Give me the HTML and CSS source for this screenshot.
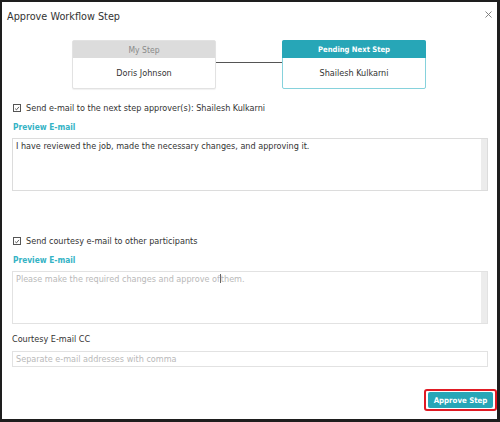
FILE: index.html
```html
<!DOCTYPE html>
<html>
<head>
<meta charset="utf-8">
<link rel="stylesheet" href="styles.css">
</head>
<body>
<div class="dialog">
  <div class="header">
    <span class="title">Approve Workflow Step</span>
    <svg class="close" width="7" height="7" viewBox="0 0 7 7"><path d="M0.5 0.5 L6.5 6.5 M6.5 0.5 L0.5 6.5" stroke="#777" stroke-width="0.9" fill="none"/></svg>
  </div>
  <div class="steps">
    <div class="step step-done">
      <div class="step-head">My Step</div>
      <div class="step-body">Doris Johnson</div>
    </div>
    <div class="connector"></div>
    <div class="step step-next">
      <div class="step-head">Pending Next Step</div>
      <div class="step-body">Shailesh Kulkarni</div>
    </div>
  </div>
  <label class="check-row first">
    <span class="checkbox"><svg width="7" height="7" viewBox="0 0 7 7"><path d="M1.3 3.6 L2.9 5.1 L5.8 1.6" fill="none" stroke="#333" stroke-width="0.9"/></svg></span>
    <span>Send e-mail to the next step approver(s): Shailesh Kulkarni</span>
  </label>
  <div class="preview">Preview E-mail</div>
  <div class="area">I have reviewed the job, made the necessary changes, and approving it.<span class="scroll"></span></div>
  <label class="check-row second">
    <span class="checkbox"><svg width="7" height="7" viewBox="0 0 7 7"><path d="M1.3 3.6 L2.9 5.1 L5.8 1.6" fill="none" stroke="#333" stroke-width="0.9"/></svg></span>
    <span>Send courtesy e-mail to other participants</span>
  </label>
  <div class="preview">Preview E-mail</div>
  <div class="area placeholder">Please make the required changes and approve of<span class="caret"></span>them.<span class="scroll"></span></div>
  <div class="cc-label">Courtesy E-mail CC</div>
  <div class="input placeholder">Separate e-mail addresses with comma</div>
  <div class="footer">
    <div class="highlight"><button class="approve">Approve Step</button></div>
  </div>
</div>
</body>
</html>
```
FILE: styles.css
```css
* { box-sizing: border-box; }
html, body { margin: 0; padding: 0; background: #fff; }
body {
  font-family: "DejaVu Sans Condensed", "DejaVu Sans", sans-serif;
  font-stretch: condensed;
  color: #333;
  font-size: 9px;
}
.dialog {
  width: 500px;
  height: 422px;
  border: 2px solid #1e1e1e;
  border-right-width: 3px;
  border-bottom-width: 3px;
  padding: 0 9px 0 10px;
  display: flex;
  flex-direction: column;
}
.header {
  display: flex;
  justify-content: space-between;
  align-items: center;
  height: 28px;
  margin-left: -5px;
}
.title {
  font-family: "DejaVu Sans", sans-serif;
  font-stretch: normal;
  font-size: 9.7px;
  color: #333;
}
.close { display: block; margin: -4px -4px 0 0; }
.steps {
  display: flex;
  align-items: flex-start;
  margin: 10px 0 0 60px;
}
.step {
  width: 144px;
  height: 49px;
  border-radius: 2px;
  background: #fff;
  display: flex;
  flex-direction: column;
}
.step-done { border: 1px solid #e2e2e2; box-shadow: 0 1px 1px rgba(0,0,0,0.06); }
.step-next { border: 1px solid #86d2dc; }
.step-head {
  height: 17px;
  display: flex;
  align-items: center;
  justify-content: center;
  font-size: 8.5px;
}
.step-done .step-head { background: #dcdcdc; color: #8a8a8a; }
.step-next .step-head {
  background: #27a6b7;
  color: #fff;
  font-weight: bold;
  font-size: 7.6px;
  margin: -1px -1px 0;
  height: 18px;
  border-radius: 2px 2px 0 0;
}
.step-body {
  flex: 1;
  display: flex;
  align-items: center;
  justify-content: center;
  color: #333;
}
.connector {
  width: 66px;
  height: 1px;
  background: #555;
  margin-top: 22px;
}
.check-row {
  display: flex;
  align-items: center;
  gap: 5px;
  height: 12px;
  margin-left: 1px;
}
.check-row.first { margin-top: 13px; }
.check-row.second { margin-top: 44px; }
.checkbox {
  width: 8px;
  height: 8px;
  border: 1px solid #555;
  display: flex;
  align-items: center;
  justify-content: center;
}
.checkbox svg { display: block; }
.preview {
  color: #35b3c5;
  font-weight: bold;
  font-size: 8.3px;
  margin-top: 7px;
  margin-left: 1px;
  height: 12px;
  line-height: 12px;
}
.area {
  position: relative;
  margin-top: 5px;
  height: 53px;
  border: 1px solid #dcdcdc;
  padding: 2px 10px 0 3px;
  color: #333;
  line-height: 11px;
}
.area .scroll {
  position: absolute;
  right: 0;
  top: 0;
  bottom: 0;
  width: 6px;
  background: #ececec;
}
.placeholder { color: #b9b9b9; }
.area.placeholder { border-color: #e2e2e2; }
.caret {
  display: inline-block;
  width: 1px;
  height: 9px;
  background: #666;
  vertical-align: -1px;
}
.cc-label {
  margin-top: 9px;
  height: 12px;
  line-height: 12px;
  color: #333;
}
.input {
  margin-top: 6px;
  height: 16px;
  border: 1px solid #e2e2e2;
  padding: 0 3px;
  line-height: 14px;
}
.footer {
  margin-top: auto;
  display: flex;
  justify-content: flex-end;
  padding-bottom: 8px;
  margin-right: -9px;
}
.highlight {
  border: 2px solid #e01b24;
  border-radius: 3px;
  padding: 1px 2px;
}
.approve {
  display: block;
  font-family: inherit;
  font-stretch: condensed;
  font-size: 7.8px;
  font-weight: bold;
  color: #fff;
  background: #27a6b7;
  border: none;
  border-radius: 2px;
  height: 16px;
  width: 65px;
  padding: 0;
}
```
